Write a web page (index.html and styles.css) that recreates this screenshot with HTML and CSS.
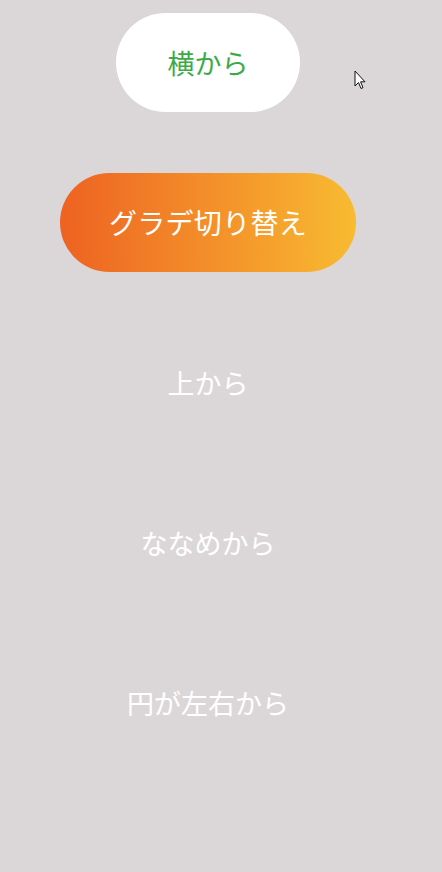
FILE: index.html
```html
<!DOCTYPE html>
<html lang="ja">
<head>
<meta charset="utf-8">
<link rel="stylesheet" href="styles.css">
</head>
<body>
<main class="list">
  <div class="btn btn-white">横から</div>
  <div class="btn btn-grad">グラデ切り替え</div>
  <div class="btn btn-plain">上から</div>
  <div class="btn btn-plain">ななめから</div>
  <div class="btn btn-plain">円が左右から</div>
</main>
<svg class="cursor" width="12" height="20" viewBox="0 0 12 20">
  <path d="M1 1 L1 16 L4.5 12.5 L7 18.5 L9 17.6 L6.6 11.8 L11 11.8 Z" fill="#fff" stroke="#111" stroke-width="1" stroke-linejoin="round"/>
</svg>
</body>
</html>
```
FILE: styles.css
```css
html, body {
  margin: 0;
  padding: 0;
  background: #dbd7d8;
}
body {
  width: 442px;
  height: 872px;
  position: relative;
  overflow: hidden;
  font-family: "Noto Sans CJK JP", "Noto Sans", sans-serif;
}
.list {
  width: 416px;
  padding-top: 13px;
  display: flex;
  flex-direction: column;
  align-items: center;
  gap: 61px;
}
.btn {
  height: 99px;
  border-radius: 50px;
  display: flex;
  align-items: center;
  justify-content: center;
  font-size: 27px;
  color: #fff;
  box-sizing: border-box;
  padding-bottom: 1px;
}
.btn-white {
  width: 184px;
  background: #fff;
  color: #3daa4a;
}
.btn-grad {
  width: 296px;
  background: linear-gradient(to right, #ee6222, #f8bb31);
  font-size: 28px;
  letter-spacing: 0.3px;
}
.btn-plain {
  width: 240px;
}
.cursor {
  position: absolute;
  left: 354px;
  top: 70px;
}
```
